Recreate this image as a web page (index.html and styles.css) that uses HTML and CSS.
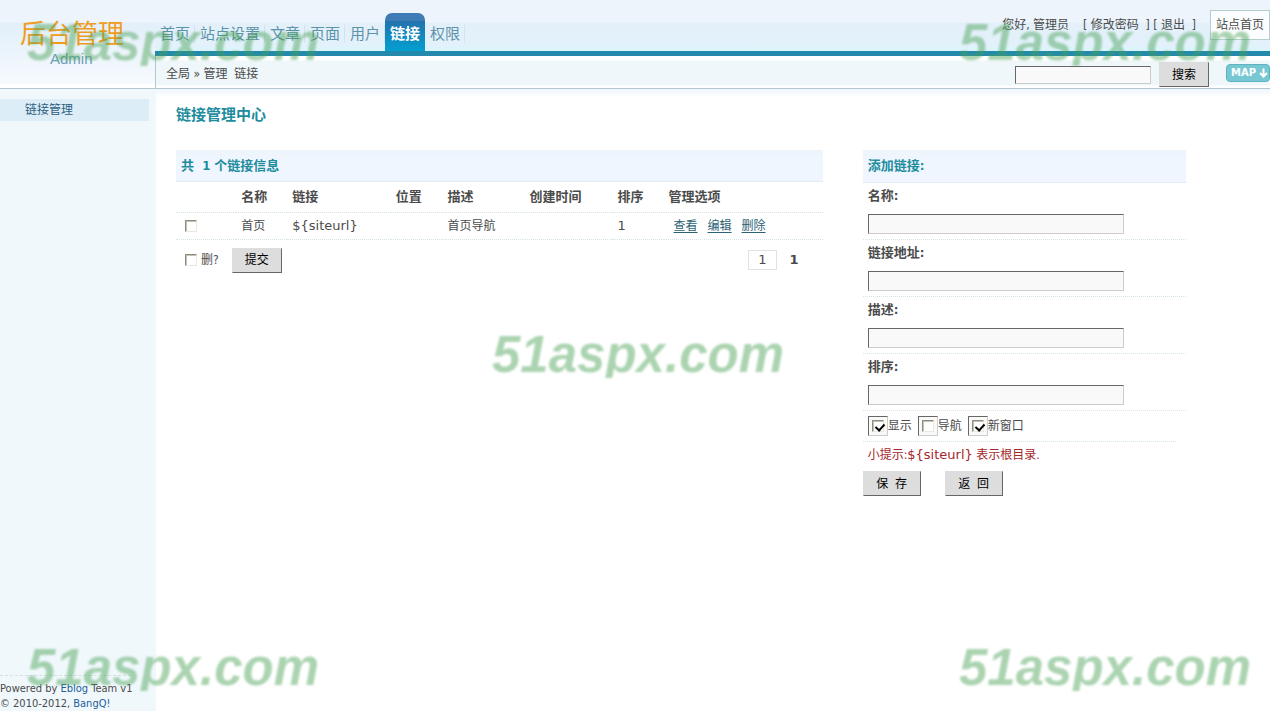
FILE: index.html
```html
<!DOCTYPE html>
<html lang="zh-CN">
<head>
<meta charset="utf-8">
<title>链接管理中心</title>
<link rel="stylesheet" href="styles.css">
</head>
<body>
<div class="page">
  <header class="header">
    <div class="brand">
      <div class="brand-name">后台管理</div>
      <div class="brand-sub">Admin</div>
    </div>
    <div class="header-main">
      <div class="topbar">
        <nav class="tabs">
          <a href="#">首页</a>
          <a href="#">站点设置</a>
          <a href="#">文章</a>
          <a href="#">页面</a>
          <a href="#">用户</a>
          <a href="#" class="active">链接</a>
          <a href="#">权限</a>
        </nav>
        <div class="account">
          <span>您好, 管理员</span>
          <span class="account-links">[ <a href="#">修改密码</a>&nbsp; ] [ <a href="#">退出</a>&nbsp; ]</span>
          <a href="#" class="home">站点首页</a>
        </div>
      </div>
      <div class="subbar">
        <div class="crumbs">全局 » 管理&nbsp; 链接</div>
        <form class="search">
          <input type="text" class="box search-box" aria-label="搜索">
          <button type="button" class="btn">搜索</button>
          <a href="#" class="map">MAP
            <svg width="9" height="10" viewBox="0 0 9 10"><path d="M4.500 0.500V8M1 5L4.500 8.500L8 5" fill="none" stroke="#fff" stroke-width="2"/></svg>
          </a>
        </form>
      </div>
    </div>
  </header>
  <div class="body">
    <aside class="sidebar">
      <a href="#" class="side-item">链接管理</a>
      <footer class="foot">
        <div>Powered by <a href="#">Eblog</a> Team v1</div>
        <div>© 2010-2012, <a href="#">BangQ!</a></div>
      </footer>
    </aside>
    <main class="main">
      <h1>链接管理中心</h1>
      <div class="columns">
        <section>
          <h2 class="list-title">共&nbsp; 1 个链接信息</h2>
          <table>
            <colgroup><col class="c1"><col class="c2"><col class="c3"><col class="c4"><col class="c5"><col class="c6"><col class="c7"><col></colgroup>
            <thead>
              <tr><th></th><th>名称</th><th>链接</th><th>位置</th><th>描述</th><th>创建时间</th><th>排序</th><th>管理选项</th></tr>
            </thead>
            <tbody>
              <tr>
                <td class="pick"><input type="checkbox" class="check" aria-label="首页"></td>
                <td>首页</td><td class="latin">${siteurl}</td><td></td><td>首页导航</td><td></td><td class="latin">1</td>
                <td><div class="ops"><a href="#">查看</a><a href="#">编辑</a><a href="#">删除</a></div></td>
              </tr>
            </tbody>
          </table>
          <div class="list-foot">
            <label class="bulk"><input type="checkbox" class="check">删?</label>
            <button type="button" class="btn">提交</button>
            <div class="pager"><a href="#">1</a><b>1</b></div>
          </div>
        </section>
        <form>
          <h2 class="form-title">添加链接:</h2>
          <div class="field"><label for="name">名称:</label><input id="name" type="text" class="box"></div>
          <div class="field"><label for="url">链接地址:</label><input id="url" type="text" class="box"></div>
          <div class="field"><label for="desc">描述:</label><input id="desc" type="text" class="box"></div>
          <div class="field"><label for="order">排序:</label><input id="order" type="text" class="box"></div>
          <div class="options">
            <label><span class="frame"><input type="checkbox" class="check" checked></span>显示</label>
            <label><span class="frame"><input type="checkbox" class="check"></span>导航</label>
            <label><span class="frame"><input type="checkbox" class="check" checked></span>新窗口</label>
          </div>
          <p class="hint">小提示:<span class="latin">${siteurl}</span> 表示根目录.</p>
          <div class="actions">
            <button type="button" class="btn wide">保&nbsp; 存</button>
            <button type="button" class="btn wide">返&nbsp; 回</button>
          </div>
        </form>
      </div>
    </main>
  </div>
  <div class="mark top left">51aspx.com</div>
  <div class="mark top right">51aspx.com</div>
  <div class="mark center">51aspx.com</div>
  <div class="mark bottom left">51aspx.com</div>
  <div class="mark bottom right">51aspx.com</div>
</div>
</body>
</html>
```
FILE: styles.css
```css
* { box-sizing: border-box; }
body {
  margin: 0;
  font: 12px/18px "DejaVu Sans Condensed", "Noto Sans CJK SC", sans-serif;
  color: #4b4b4b;
  background: #fff;
}
a { color: inherit; text-decoration: none; }
input, button { font: inherit; margin: 0; }
h1, h2, p { margin: 0; }
.page { position: relative; min-height: 100vh; display: flex; flex-direction: column; overflow: hidden; }

.header { display: flex; border-bottom: 1px solid #b3c7d1; background: #f0f7fc; }
.brand {
  width: 155px;
  padding-top: 18px;
  display: flex;
  flex-direction: column;
  background: linear-gradient(#eef4fb 0 22px, #e2eff9 23px, #f6fafe 84px, #fff 84px);
}
.brand-name { padding-left: 20px; font-size: 26px; line-height: 33px; color: #f09c22; }
.brand-sub { padding-left: 50px; font: 15px/16px "Liberation Sans", sans-serif; color: #6d9fb8; }
.header-main { flex: 1; min-width: 0; }
.topbar {
  height: 56px;
  display: flex;
  justify-content: space-between;
  border-bottom: 5px solid #248aad;
  background: linear-gradient(#eef4fb 0 22px, #e3f0fa 23px, #e3f1fb 45px, #d9f6fc 51px);
}
.tabs { display: flex; align-items: flex-start; padding-top: 13px; }
.tabs a {
  padding: 0 4px 0 5px;
  border-right: 1px solid #d3e2ec;
  margin-top: 12px;
  font-size: 15px;
  line-height: 18px;
  color: #5d93a9;
}
.tabs .active {
  height: 38px;
  margin-top: 0;
  padding: 0 5px;
  border: 0;
  border-radius: 7px 7px 0 0;
  background: linear-gradient(#3f7cb5 0 8px, #2272ae 8px, #049fd0 38px);
  color: #fff;
  font-weight: bold;
  line-height: 42px;
}
.account { display: flex; align-items: flex-start; gap: 14px; line-height: 30px; padding-top: 10px; }
.account .home { padding: 0 5px; line-height: 28px; border: 1px solid #b5cfd1; background: #fbfdfe; }
.subbar {
  height: 32px;
  display: flex;
  align-items: center;
  justify-content: space-between;
  padding-left: 10px;
  border-left: 1px solid #b3c7d1;
  background: linear-gradient(#fff 0 4px, #eff7fb 5px 29px, #fff 30px);
}
.crumbs { padding-top: 3px; }
.search { display: flex; align-items: center; padding-top: 5px; }
.box { height: 20px; padding: 0 4px; border: 1px solid; border-color: #666 #ccc #ccc #666; background: #f9f9f9; }
.search-box { width: 136px; height: 18px; margin-right: 8px; }
.btn {
  height: 25px;
  padding: 0 12px;
  border: 1px solid;
  border-color: #ddd #666 #666 #ddd;
  border-radius: 0;
  background: #ddd;
  color: #000;
}
.map {
  display: flex;
  align-items: center;
  gap: 3px;
  height: 18px;
  margin: -4px 0 0 17px;
  padding: 0 1px 0 4px;
  border: 1px solid #5fb3c1;
  border-radius: 4px;
  background: #76c8d3;
  color: #fff;
  font: bold 10px/16px "DejaVu Sans", sans-serif;
}

.body { flex: 1; display: flex; }
.sidebar { width: 156px; display: flex; flex-direction: column; background: #f0f8fc; padding-top: 10px; }
.side-item { width: 149px; padding-left: 25px; line-height: 22px; background: #ddedf7; color: #2c5f80; }
.foot { width: 131px; margin-top: auto; padding-top: 5px; border-top: 1px dashed #d4e0e2; font-size: 11px; line-height: 15px; white-space: nowrap; }
.foot a { color: #1f5c99; }
.main { flex: 1; padding: 15px 84px 20px 20px; background: linear-gradient(#eff6fd, #fff 8px); }
h1 { font-size: 15px; line-height: 22px; color: #218c9d; }
.columns { display: grid; grid-template-columns: 2fr 1fr; gap: 40px; margin-top: 24px; }
h2 { padding: 0 5px; font-size: 13px; color: #218c9d; background: linear-gradient(#edf4fa, #f0f6ff 10px); border-bottom: 1px dotted #d5e4e8; }
.list-title { line-height: 31px; }
.form-title { line-height: 32px; }
table { width: 100%; table-layout: fixed; border-collapse: collapse; }
.c1 { width: 9.300%; } .c2 { width: 7.900%; } .c3 { width: 16%; } .c4 { width: 8%; }
.c5 { width: 12.700%; } .c6 { width: 13.600%; } .c7 { width: 7.900%; }
th, td { padding: 0 5px; text-align: left; border-bottom: 1px dotted #d5e4e8; }
th { height: 30px; font-size: 13px; }
td { height: 27px; }
.pick { padding-left: 9px; }
.latin { font: 13px/18px "DejaVu Sans", sans-serif; }
.check {
  appearance: none;
  display: block;
  position: relative;
  width: 12px;
  height: 12px;
  border: 1px solid;
  border-color: #8f8d82 #eae8dd #eae8dd #8f8d82;
  box-shadow: inset 1px 1px #c3c0b4;
  background: #fff;
}
.check:checked::after {
  content: "";
  position: absolute;
  left: 4px;
  top: 1px;
  width: 4px;
  height: 7px;
  border: solid #000;
  border-width: 0 2px 2px 0;
  transform: rotate(42deg);
}
.ops { display: flex; gap: 10px; padding-left: 5px; }
.ops a { color: #2d6275; text-decoration: underline; text-underline-offset: 2px; }
.list-foot { display: flex; align-items: center; padding: 8px 24px 8px 9px; }
.bulk { display: flex; align-items: center; gap: 4px; margin-right: 13px; }
.pager { display: flex; align-items: center; gap: 13px; margin-left: auto; font: 13px/18px "DejaVu Sans", sans-serif; }
.pager a { padding: 0 9px; border: 1px solid #e2e2e2; }
.field { display: grid; gap: 9px; padding: 4px 5px 5px; border-bottom: 1px dotted #d5e4e8; }
.field label { font-size: 13px; font-weight: bold; }
.field .box { width: 256px; max-width: 100%; }
.options { display: flex; gap: 6px; margin-right: 10px; padding: 5px 5px; border-bottom: 1px dotted #d5e4e8; }
.options label { display: flex; align-items: center; }
.frame { padding: 3px; border: 1px solid; border-color: #666 #ccc #ccc #666; background: #f9f9f9; }
.hint { padding: 4px 5px 7px; color: #a3262a; }
.actions { display: flex; gap: 24px; }
.wide { width: 58px; padding: 0; }

.mark {
  position: absolute;
  height: 44px;
  overflow: hidden;
  font: italic bold 51px/42px "Liberation Sans", sans-serif;
  color: #46a052;
  opacity: 0.45;
  filter: blur(1px);
  pointer-events: none;
}
.top { top: 22px; }
.bottom { bottom: 20px; }
.left { left: 27px; }
.right { right: 19px; }
.center { top: 334px; left: 6px; right: 0; text-align: center; }
```
